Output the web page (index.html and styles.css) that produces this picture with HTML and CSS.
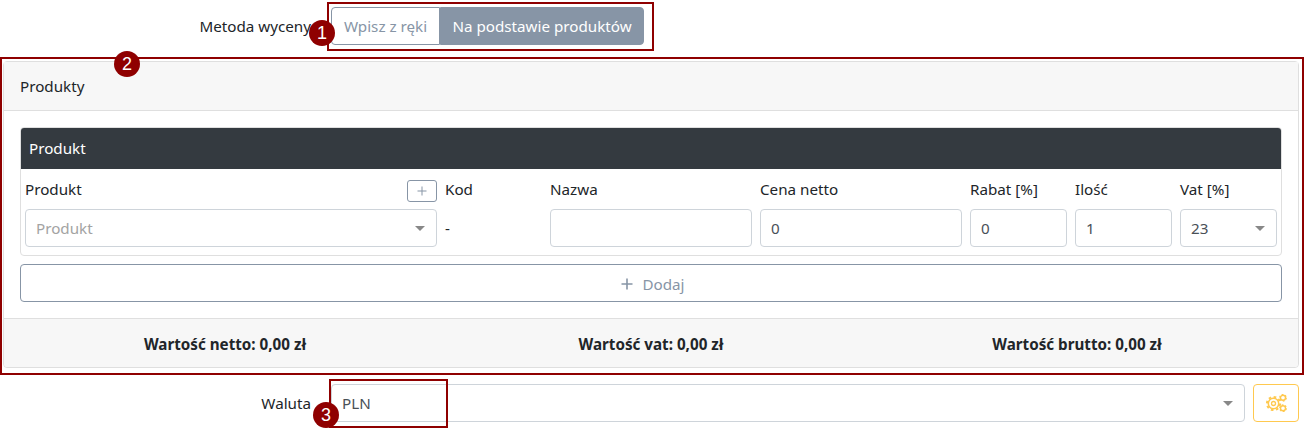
FILE: index.html
```html
<!DOCTYPE html>
<html lang="pl">
<head>
<meta charset="utf-8">
<title>Metoda wyceny</title>
<link rel="stylesheet" href="styles.css">
</head>
<body>
<div class="page">
  <div class="form-row method-row">
    <label class="form-label">Metoda wyceny</label>
    <div class="toggle">
      <button class="toggle-btn">Wpisz z ręki</button>
      <button class="toggle-btn active">Na podstawie produktów</button>
    </div>
  </div>

  <section class="card">
    <header class="card-head">Produkty</header>
    <div class="card-body">
      <div class="inner-card">
        <div class="inner-head">Produkt</div>
        <div class="inner-body">
          <div class="field span-4">
            <div class="field-head"><span>Produkt</span>
              <button class="mini-add"><svg width="10" height="10" viewBox="0 0 10 10"><path d="M5 .5v9M.5 5h9" class="plus-line"/></svg></button>
            </div>
            <div class="control select placeholder"><span>Produkt</span><i class="caret"></i></div>
          </div>
          <div class="field span-1">
            <div class="field-head"><span>Kod</span></div>
            <div class="static">-</div>
          </div>
          <div class="field span-2">
            <div class="field-head"><span>Nazwa</span></div>
            <input class="control" type="text">
          </div>
          <div class="field span-2">
            <div class="field-head"><span>Cena netto</span></div>
            <input class="control" type="text" value="0">
          </div>
          <div class="field span-1">
            <div class="field-head"><span>Rabat [%]</span></div>
            <input class="control" type="text" value="0">
          </div>
          <div class="field span-1">
            <div class="field-head"><span>Ilość</span></div>
            <input class="control" type="text" value="1">
          </div>
          <div class="field span-1">
            <div class="field-head"><span>Vat [%]</span></div>
            <div class="control select compact"><span>23</span><i class="caret"></i></div>
          </div>
        </div>
      </div>
      <button class="add-btn"><svg width="12" height="12" viewBox="0 0 12 12"><path d="M6 .5v11M.5 6h11" class="plus-line thick"/></svg>Dodaj</button>
    </div>
    <footer class="card-foot">
      <div>Wartość netto: 0,00 zł</div>
      <div>Wartość vat: 0,00 zł</div>
      <div>Wartość brutto: 0,00 zł</div>
    </footer>
  </section>

  <div class="form-row currency-row">
    <label class="form-label">Waluta</label>
    <div class="control select currency"><span>PLN</span><i class="caret"></i></div>
    <button class="gear-btn" aria-label="Ustawienia">
      <svg width="21" height="18" viewBox="0 0 21 18" class="gears">
        <circle cx="7.5" cy="9.5" r="5.2" class="gear-ring"/>
        <circle cx="7.5" cy="9.5" r="6.6" class="gear-teeth big"/>
        <circle cx="7.5" cy="9.5" r="2" class="gear-hub"/>
        <circle cx="17" cy="3.8" r="2.5" class="gear-ring small"/>
        <circle cx="17" cy="3.8" r="3.2" class="gear-teeth tiny"/>
        <circle cx="17" cy="14.2" r="2.5" class="gear-ring small"/>
        <circle cx="17" cy="14.2" r="3.2" class="gear-teeth tiny"/>
      </svg>
    </button>
  </div>

  <div class="mark box-1"></div>
  <div class="mark box-2"></div>
  <div class="mark box-3"></div>
  <div class="badge badge-1">1</div>
  <div class="badge badge-2">2</div>
  <div class="badge badge-3">3</div>
</div>
</body>
</html>
```
FILE: styles.css
```css
* { box-sizing: border-box; }
html, body { margin: 0; background: #fff; }
body {
  font-family: "Noto Sans", "Open Sans", sans-serif;
  font-size: 15.2px;
  line-height: 21px;
  color: #212529;
  overflow: hidden;
}
button, input { font: inherit; }
.page {
  position: relative;
  width: 1309px;
  height: 430px;
  padding: 7px 10px 0 3px;
}
.form-row {
  display: grid;
  grid-template-columns: 308px 1fr;
  column-gap: 20px;
  align-items: center;
  height: 38px;
}
.method-row { margin-bottom: 16px; }
.currency-row {
  margin-top: 16px;
  grid-template-columns: 308px 1fr 46px;
  column-gap: 0;
}
.currency-row .control { margin-left: 20px; width: 914px; }
.currency-row .gear-btn { justify-self: end; }
.form-label { text-align: right; }

.toggle { display: flex; height: 38px; }
.toggle-btn {
  height: 38px;
  padding: 0;
  border: 1px solid #8795a6;
  background: #fff;
  color: #8795a6;
  border-radius: 4px 0 0 4px;
  width: 109px;
  white-space: nowrap;
}
.toggle-btn.active {
  width: 204px;
  background: #8795a6;
  color: #fff;
  border-radius: 0 4px 4px 0;
}

.card {
  height: 307px;
  border: 1px solid #dfdfdf;
  border-radius: 4px;
  display: flex;
  flex-direction: column;
}
.card-head {
  height: 49px;
  flex: none;
  padding: 14px 16px 0;
  background: #f7f7f7;
  border-bottom: 1px solid #dfdfdf;
}
.card-body { flex: 1; padding: 16px; }
.inner-card {
  border: 1px solid #dfdfdf;
  border-radius: 4px;
  height: 129px;
  margin-bottom: 8px;
}
.inner-head {
  height: 41px;
  padding: 10px 8px 0;
  background: #343a40;
  color: #fff;
  border-radius: 3px 3px 0 0;
}
.inner-body {
  display: grid;
  grid-template-columns: repeat(12, 1fr);
  column-gap: 8px;
  padding: 11px 4px 0;
}
.span-4 { grid-column: span 4; }
.span-2 { grid-column: span 2; }
.span-1 { grid-column: span 1; }
.field { min-width: 0; }
.field-head {
  display: flex;
  justify-content: space-between;
  align-items: flex-start;
  height: 22px;
  line-height: 19px;
  margin-bottom: 7px;
  white-space: nowrap;
}
.mini-add {
  width: 30px;
  height: 22px;
  padding: 0;
  background: #fff;
  border: 1px solid #8795a6;
  border-radius: 3px;
  display: flex;
  align-items: center;
  justify-content: center;
}
.plus-line { stroke: #8795a6; stroke-width: 1; fill: none; }
.plus-line.thick { stroke-width: 1.6; }
.control {
  display: flex;
  align-items: center;
  justify-content: space-between;
  width: 100%;
  height: 38px;
  padding: 0 10px;
  border: 1px solid #ced4da;
  border-radius: 4px;
  background: #fff;
  color: #495057;
  outline: none;
}
.select { padding-right: 11px; }
.select.placeholder { color: #a3a3a3; }
.select.compact { color: #495057; }
.caret {
  width: 0;
  height: 0;
  border-style: solid;
  border-width: 5px 5px 0;
  border-color: #888 transparent transparent;
}
.static { height: 38px; display: flex; align-items: center; }

.add-btn {
  width: 100%;
  height: 38px;
  padding: 2px 0 0 4px;
  display: flex;
  align-items: center;
  justify-content: center;
  gap: 9px;
  border: 1px solid #8795a6;
  border-radius: 4px;
  background: #fff;
  color: #8795a6;
}
.card-foot {
  height: 49px;
  flex: none;
  padding: 2px 8px 0;
  display: grid;
  grid-template-columns: repeat(3, 1fr);
  align-items: center;
  text-align: center;
  font-weight: 700;
  background: #f7f7f7;
  border-top: 1px solid #dfdfdf;
  border-radius: 0 0 4px 4px;
}

.gear-btn {
  width: 46px;
  height: 38px;
  padding: 0;
  display: flex;
  align-items: center;
  justify-content: center;
  background: #fff;
  border: 1px solid #ffc94f;
  border-radius: 4px;
}
.gears circle { fill: none; stroke: #ffc94f; }
.gears .gear-ring { stroke-width: 1.5; }
.gears .gear-ring.small { stroke-width: 1.4; }
.gears .gear-hub { stroke-width: 1.3; }
.gears .gear-teeth.big { stroke-width: 2; stroke-dasharray: 2.6 2.58; }
.gears .gear-teeth.tiny { stroke-width: 1.4; stroke-dasharray: 1.7 1.65; }

.mark {
  position: absolute;
  border: 2px solid #8f0000;
  pointer-events: none;
}
.box-1 { left: 327px; top: 2px; width: 327px; height: 49px; }
.box-2 { left: 0; top: 57px; width: 1304px; height: 318px; }
.box-3 { left: 329px; top: 379px; width: 119px; height: 49px; }
.badge {
  position: absolute;
  width: 26px;
  height: 26px;
  border-radius: 50%;
  background: #8f0000;
  color: #fff;
  font: 18px/26px "Liberation Sans", Arial, sans-serif;
  text-align: center;
}
.badge-1 { left: 309px; top: 20px; }
.badge-2 { left: 114px; top: 51px; }
.badge-3 { left: 313px; top: 402px; }
```
